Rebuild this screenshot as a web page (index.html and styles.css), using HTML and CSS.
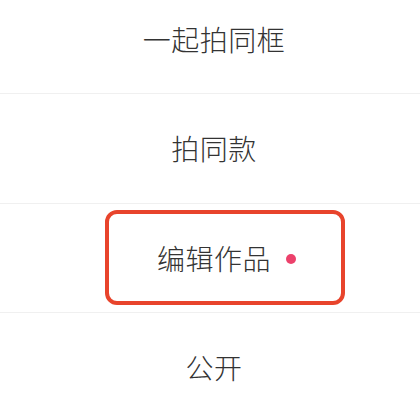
FILE: index.html
```html
<!DOCTYPE html>
<html lang="zh">
<head>
<meta charset="utf-8">
<link rel="stylesheet" href="styles.css">
</head>
<body>
<div class="sheet">
  <div class="row first"><span class="label">一起拍同框</span></div>
  <div class="row"><span class="label">拍同款</span></div>
  <div class="row"><span class="label">编辑作品</span><span class="dot"></span></div>
  <div class="row"><span class="label">公开</span></div>
  <div class="highlight"></div>
</div>
</body>
</html>
```

FILE: styles.css
```css
html, body {
  margin: 0;
  padding: 0;
  background: #ffffff;
}
.sheet {
  position: relative;
  width: 420px;
  height: 406px;
  overflow: hidden;
  font-family: "Noto Sans CJK SC", "Noto Sans", sans-serif;
  color: #333333;
}
.row {
  height: 108.5px;
  display: flex;
  align-items: center;
  justify-content: center;
  padding-left: 8px;
  border-bottom: 1px solid #f0f0f0;
  position: relative;
}
.row.first {
  margin-top: -15.5px;
}
.label {
  font-size: 28px;
  line-height: 1;
  font-weight: 300;
  letter-spacing: 0.5px;
}
.dot {
  position: absolute;
  left: 286px;
  top: 50%;
  width: 10px;
  height: 10px;
  margin-top: -4px;
  border-radius: 50%;
  background: #ec416b;
}
.highlight {
  position: absolute;
  left: 105px;
  top: 210px;
  width: 232px;
  height: 87px;
  border: 4px solid #e8442c;
  border-radius: 12px;
}
```
